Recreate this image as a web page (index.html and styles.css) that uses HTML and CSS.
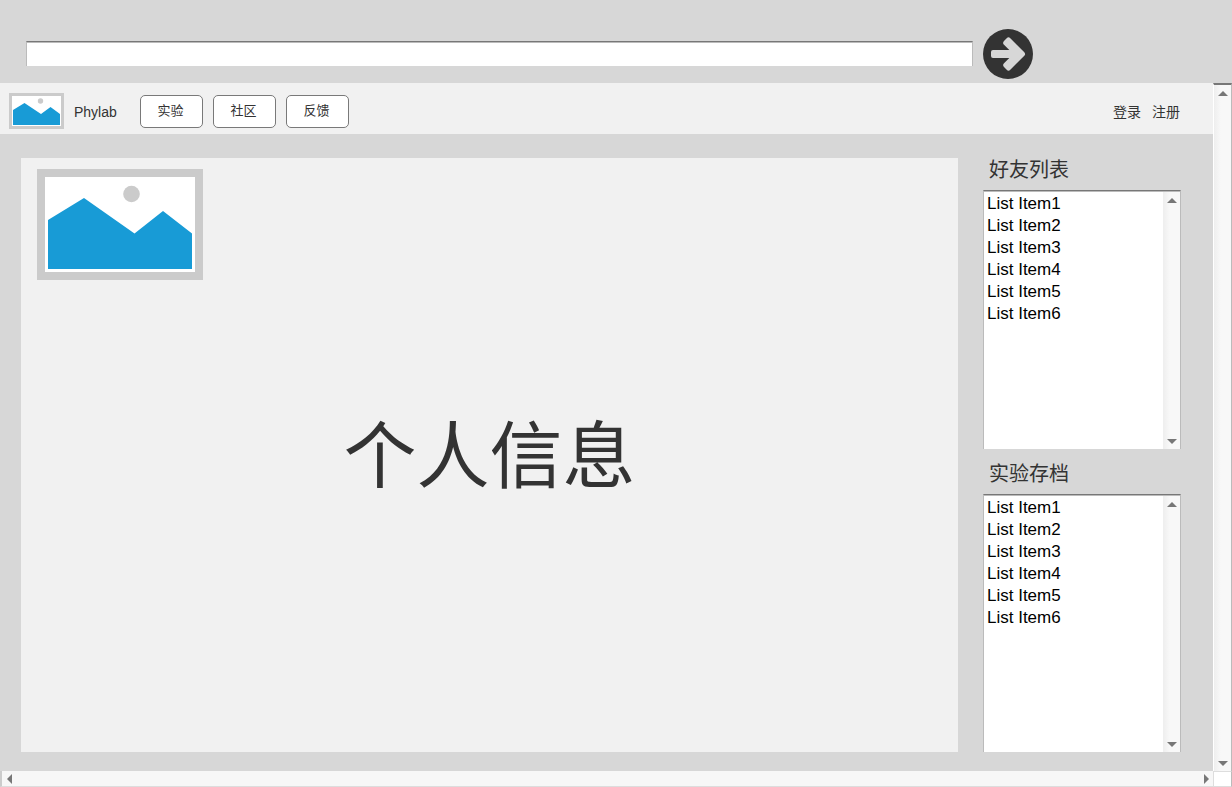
FILE: index.html
```html
<!DOCTYPE html>
<html lang="zh-CN">
<head>
<meta charset="utf-8">
<title>Phylab</title>
<link rel="stylesheet" href="styles.css">
</head>
<body>
<form class="address">
  <input class="address-input" type="text" aria-label="地址">
  <button class="go" type="button" aria-label="前往">
    <svg viewBox="0 0 50 50" width="50" height="50"><circle cx="25" cy="25" r="25" fill="#333"/><path d="M10 21H26.300L21 15.700Q19.200 13.900 21 12.100L23.700 9.200Q25.500 7.400 27.300 9.200L41.300 23.200Q43 25 41.300 26.800L27.300 40.800Q25.500 42.600 23.700 40.800L21 37.900Q19.200 36.100 21 34.300L26.300 29H10Q8 29 8 27V23Q8 21 10 21Z" fill="#d7d7d7"/></svg>
  </button>
</form>
<div class="frame">
  <div class="page">
    <header class="header">
      <svg class="logo" viewBox="0 0 55 36" width="55" height="36"><path d="M0 0H55V36H0Z" fill="#cbcbcb"/><path d="M3 3H52V33H3Z" fill="#fff"/><circle cx="31.500" cy="8" r="2.700" fill="#cbcbcb"/><path d="M4 17L15.500 10L32 21L41.500 14L51 21V32H4Z" fill="#189bd6"/></svg>
      <span class="brand">Phylab</span>
      <nav class="nav">
        <button class="nav-button" type="button">实验</button>
        <button class="nav-button" type="button">社区</button>
        <button class="nav-button" type="button">反馈</button>
      </nav>
      <div class="account">
        <a class="account-link" href="#">登录</a>
        <a class="account-link" href="#">注册</a>
      </div>
    </header>
    <div class="content">
      <main class="profile">
        <svg class="avatar" viewBox="0 0 166 111" width="166" height="111"><path d="M0 0H166V111H0Z" fill="#cbcbcb"/><path d="M8 8H158V103H8Z" fill="#fff"/><circle cx="94.500" cy="25" r="8.300" fill="#cbcbcb"/><path d="M11 51L47 29L97.500 64.500L126 42L155 64.500V100H11Z" fill="#189bd6"/></svg>
        <h1 class="profile-title">个人信息</h1>
      </main>
      <aside class="sidebar">
        <section class="group">
          <label class="group-title" for="friends">好友列表</label>
          <div class="listbox">
            <select class="list" id="friends" size="6">
              <option>List Item1</option><option>List Item2</option><option>List Item3</option><option>List Item4</option><option>List Item5</option><option>List Item6</option>
            </select>
            <div class="track" aria-hidden="true"><i class="arrow up"></i><i class="arrow down"></i></div>
          </div>
        </section>
        <section class="group archive">
          <label class="group-title" for="archive">实验存档</label>
          <div class="listbox">
            <select class="list" id="archive" size="6">
              <option>List Item1</option><option>List Item2</option><option>List Item3</option><option>List Item4</option><option>List Item5</option><option>List Item6</option>
            </select>
            <div class="track" aria-hidden="true"><i class="arrow up"></i><i class="arrow down"></i></div>
          </div>
        </section>
      </aside>
    </div>
  </div>
  <div class="track page-track" aria-hidden="true"><i class="arrow up"></i><i class="arrow down"></i></div>
  <div class="track-x" aria-hidden="true"><i class="arrow left"></i><i class="arrow right"></i></div>
  <div class="corner"></div>
</div>
</body>
</html>
```
FILE: styles.css
```css
* { box-sizing: border-box; }

body {
  margin: 0;
  min-height: 100vh;
  display: flex;
  flex-direction: column;
  background: #d7d7d7;
  color: #333;
  font-family: "Liberation Sans", "Noto Sans CJK SC", sans-serif;
  font-size: 14px;
}

button, input, select { font: inherit; color: inherit; }
svg { display: block; }

.address {
  display: flex;
  align-items: center;
  gap: 10px;
  padding: 29px 199px 4px 26px;
}

.address-input {
  flex: 1;
  min-width: 0;
  height: 25px;
  margin-bottom: 2px;
  padding: 0 4px;
  background: #fff;
  border: 1px solid #bbb;
  border-top-color: #777;
  border-bottom: 0;
  box-shadow: inset 0 1px #bbb;
  outline: none;
}

.go {
  padding: 0;
  border: 0;
  border-radius: 50%;
  background: none;
}

.frame {
  flex: 1;
  display: grid;
  grid-template-columns: minmax(0, 1fr) 19px;
  grid-template-rows: 1fr 16px;
}

.page {
  display: flex;
  flex-direction: column;
}

.header {
  display: flex;
  align-items: center;
  height: 51px;
  padding: 5px 33px 0 9px;
  background: #f1f1f1;
}

.brand {
  width: 66px;
  margin-left: 10px;
  padding-top: 2px;
}

.nav { display: flex; gap: 10px; }

.nav-button {
  width: 63px;
  height: 33px;
  padding: 0 2px 0 0;
  background: #fff;
  border: 1px solid #797979;
  border-radius: 5px;
  font-size: 13px;
  line-height: 20px;
}

.account {
  display: flex;
  gap: 11px;
  margin-left: auto;
}

.account-link {
  color: inherit;
  text-decoration: none;
}

.content {
  flex: 1;
  display: flex;
  gap: 25px;
  padding: 12px 32px 19px 21px;
}

.profile {
  flex: 1;
  display: grid;
  margin-top: 12px;
  background: #f1f1f1;
}

.avatar { grid-area: 1 / 1; margin: 11px 16px; }

.profile-title {
  grid-area: 1 / 1;
  place-self: center;
  margin: 0;
  padding-top: 4px;
  font-size: 73px;
  font-weight: 400;
  line-height: 84px;
}

.sidebar {
  width: 198px;
  display: flex;
  flex-direction: column;
}

.group {
  flex: 1;
  display: flex;
  flex-direction: column;
}

.archive { padding-top: 1px; }

.group-title {
  height: 44px;
  padding: 4px 0 0 6px;
  font-size: 20px;
  line-height: 40px;
}

.listbox {
  flex: 1;
  display: flex;
  background: #fff;
  border: 1px solid #bbb;
  border-top-color: #777;
  border-bottom: 0;
  box-shadow: inset 0 1px #bbb;
}

.list {
  flex: 1;
  min-width: 0;
  margin-top: 1px;
  padding: 1px 0 0;
  border: 0;
  border-radius: 0;
  outline: none;
  background: #fff;
  color: #000;
  font-size: 17px;
  scrollbar-width: none;
}

.list option {
  height: 22px;
  padding: 1px 3px 0;
  line-height: 21px;
}

.track {
  width: 17px;
  display: flex;
  flex-direction: column;
  align-items: center;
  justify-content: space-between;
  margin-top: 1px;
  padding: 6px 0 5px;
  background: linear-gradient(90deg, #eee, #f8f8f8 40%);
}

.page-track {
  width: auto;
  margin-top: 0;
  border: 1px solid #bbb;
  border-top: 2px solid #777;
  border-left-color: #fff;
  border-bottom: 0;
}

.track-x {
  display: flex;
  align-items: center;
  justify-content: space-between;
  padding: 0 4px 0 5px;
  background: #f7f7f7;
  border-left: 2px solid #ccc;
  border-bottom: 1px solid #ddd;
}

.corner {
  background: #fff;
  border: 1px solid #ddd;
  border-right-color: #bbb;
}

.arrow { width: 0; height: 0; border: 0 solid transparent; }
.up { border-width: 0 5px 5px; border-bottom-color: #777; }
.down { border-width: 5px 5px 0; border-top-color: #777; }
.left { border-width: 5px 5px 5px 0; border-right-color: #777; }
.right { border-width: 5px 0 5px 5px; border-left-color: #777; }
```
